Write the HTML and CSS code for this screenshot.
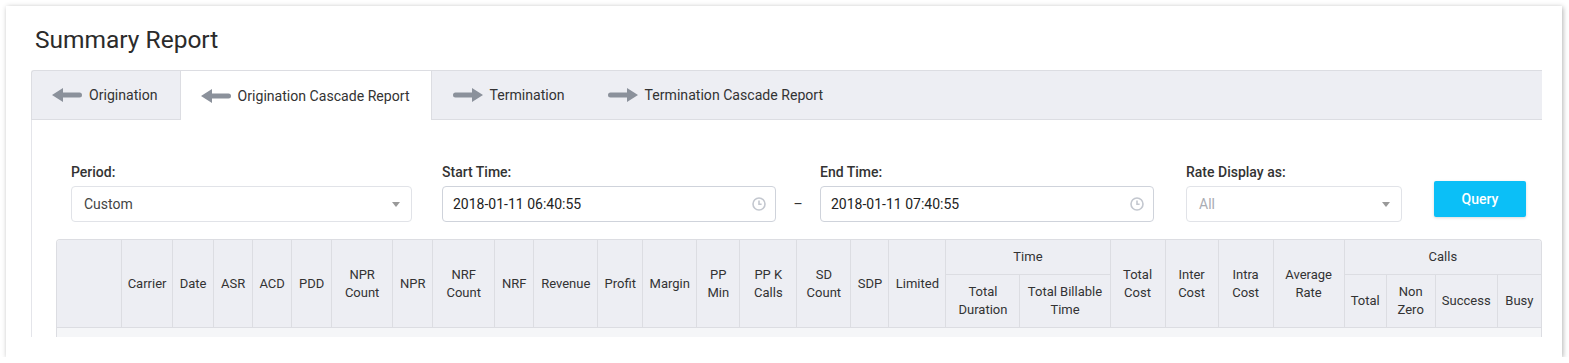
FILE: index.html
```html
<!DOCTYPE html>
<html lang="en">
<head>
  <meta charset="UTF-8">
  <title>Summary Report</title>
  <link rel="stylesheet" href="styles.css">
</head>
<body>

  <div class="card">
    <h1 class="page-title">Summary Report</h1>

    <div class="tabs">
      <div class="tab">
        <svg class="arrow" width="30" height="14" viewBox="0 0 30 14"><path d="M0 7 L11 0 L11 4.5 L27.5 4.5 Q30 4.5 30 7 Q30 9.5 27.5 9.5 L11 9.5 L11 14 Z"/></svg>
        <span>Origination</span>
      </div>
      <div class="tab active">
        <svg class="arrow" width="30" height="14" viewBox="0 0 30 14"><path d="M0 7 L11 0 L11 4.5 L27.5 4.5 Q30 4.5 30 7 Q30 9.5 27.5 9.5 L11 9.5 L11 14 Z"/></svg>
        <span>Origination Cascade Report</span>
      </div>
      <div class="tab">
        <svg class="arrow" width="30" height="14" viewBox="0 0 30 14"><path d="M30 7 L19 0 L19 4.5 L2.5 4.5 Q0 4.5 0 7 Q0 9.5 2.5 9.5 L19 9.5 L19 14 Z"/></svg>
        <span>Termination</span>
      </div>
      <div class="tab">
        <svg class="arrow" width="30" height="14" viewBox="0 0 30 14"><path d="M30 7 L19 0 L19 4.5 L2.5 4.5 Q0 4.5 0 7 Q0 9.5 2.5 9.5 L19 9.5 L19 14 Z"/></svg>
        <span>Termination Cascade Report</span>
      </div>
    </div>

    <div class="tab-panel">
      <div class="filters">
        <div class="field field-period">
          <label>Period:</label>
          <div class="control">
            <span class="value">Custom</span>
            <span class="caret"></span>
          </div>
        </div>

        <div class="field field-time">
          <label>Start Time:</label>
          <div class="control input">
            <span class="value dark">2018-01-11 06:40:55</span>
            <svg class="clock" width="14" height="14" viewBox="0 0 14 14"><circle cx="7" cy="7" r="6" /><path d="M7 3.6 V7.3 H9.6" /></svg>
          </div>
        </div>

        <div class="dash">–</div>

        <div class="field field-time">
          <label>End Time:</label>
          <div class="control input">
            <span class="value dark">2018-01-11 07:40:55</span>
            <svg class="clock" width="14" height="14" viewBox="0 0 14 14"><circle cx="7" cy="7" r="6" /><path d="M7 3.6 V7.3 H9.6" /></svg>
          </div>
        </div>

        <div class="field field-rate">
          <label>Rate Display as:</label>
          <div class="control">
            <span class="value placeholder">All</span>
            <span class="caret"></span>
          </div>
        </div>

        <button class="btn-query">Query</button>
      </div>

      <div class="table-wrap">
        <table class="report">
          <colgroup>
            <col style="width:65px"><col style="width:51px"><col style="width:41px"><col style="width:39px">
            <col style="width:39px"><col style="width:40px"><col style="width:61px"><col style="width:40px">
            <col style="width:62px"><col style="width:39px"><col style="width:64px"><col style="width:45px">
            <col style="width:54px"><col style="width:43px"><col style="width:57px"><col style="width:54px">
            <col style="width:38px"><col style="width:57px"><col style="width:74px"><col style="width:90px">
            <col style="width:55px"><col style="width:53px"><col style="width:55px"><col style="width:71px">
            <col style="width:42px"><col style="width:49px"><col style="width:62px"><col style="width:43px">
          </colgroup>
          <thead>
            <tr class="row-group">
              <th rowspan="2"></th>
              <th rowspan="2">Carrier</th>
              <th rowspan="2">Date</th>
              <th rowspan="2">ASR</th>
              <th rowspan="2">ACD</th>
              <th rowspan="2">PDD</th>
              <th rowspan="2">NPR<br>Count</th>
              <th rowspan="2">NPR</th>
              <th rowspan="2">NRF<br>Count</th>
              <th rowspan="2">NRF</th>
              <th rowspan="2">Revenue</th>
              <th rowspan="2">Profit</th>
              <th rowspan="2">Margin</th>
              <th rowspan="2">PP<br>Min</th>
              <th rowspan="2">PP K<br>Calls</th>
              <th rowspan="2">SD<br>Count</th>
              <th rowspan="2">SDP</th>
              <th rowspan="2">Limited</th>
              <th colspan="2">Time</th>
              <th rowspan="2">Total<br>Cost</th>
              <th rowspan="2">Inter<br>Cost</th>
              <th rowspan="2">Intra<br>Cost</th>
              <th rowspan="2">Average<br>Rate</th>
              <th colspan="4" class="last">Calls</th>
            </tr>
            <tr class="row-sub">
              <th>Total<br>Duration</th>
              <th>Total Billable<br>Time</th>
              <th>Total</th>
              <th>Non<br>Zero</th>
              <th>Success</th>
              <th class="last">Busy</th>
            </tr>
          </thead>
          <tbody>
            <tr>
              <td colspan="28"></td>
            </tr>
          </tbody>
        </table>
      </div>
    </div>
  </div>

</body>
</html>
```

FILE: styles.css
```css
* {
  margin: 0;
  padding: 0;
  box-sizing: border-box;
}

body {
  background-color: #fff;
  color: #333;
  font-family: Roboto, 'Liberation Sans', sans-serif;
  font-size: 14px;
}

.card {
  margin: 6px 7px 0 6px;
  padding: 20px 20px 20px 25px;
  background: #fff;
  box-shadow: 1px 1px 5px rgba(0, 0, 0, 0.3);
}

.page-title {
  font-size: 24.5px;
  font-weight: 400;
  line-height: 28px;
  color: #2b2b2b;
  padding-left: 4px;
  margin-bottom: 16px;
}

/* Tabs */
.tabs {
  display: flex;
  height: 50px;
  background: #edeef3;
  border: 1px solid #dcdde2;
  border-right: none;
  border-radius: 3px 0 0 0;
}

.tab {
  display: flex;
  align-items: center;
  gap: 7px;
  padding: 0 21px 0 20px;
  border-left: 1px solid transparent;
  border-right: 1px solid transparent;
  color: #333;
  font-size: 14.1px;
  cursor: pointer;
}

.tab:first-child {
  border-left: none;
}

.tab.active {
  background: #fff;
  border-color: #dcdde2;
  margin-bottom: -1px;
}

.arrow {
  fill: #8b919b;
  flex-shrink: 0;
}

.tab-panel {
  border-left: 1px solid #e4e5ea;
  padding: 42px 0 0 24px;
}

/* Filters */
.filters {
  display: flex;
  align-items: flex-end;
  padding: 0 16px 0 15px;
  margin-bottom: 17px;
}

.field label {
  display: block;
  font-size: 14px;
  font-weight: 500;
  line-height: 20px;
  color: #333;
  margin-bottom: 4px;
}

.field-period {
  width: 341px;
  margin-right: 30px;
}

.field-time {
  width: 334px;
}

.field-rate {
  width: 216px;
  margin-left: 32px;
  margin-right: 32px;
}

.dash {
  width: 44px;
  height: 36px;
  line-height: 36px;
  text-align: center;
  color: #333;
}

.control {
  display: flex;
  align-items: center;
  justify-content: space-between;
  height: 36px;
  padding: 0 11px 0 12px;
  border: 1px solid #e1e3e8;
  border-radius: 4px;
  background: #fff;
}

.control.input {
  border-color: #cfd3db;
  padding: 0 9px 0 10px;
}

.value {
  color: #444;
}

.value.dark {
  color: #222;
}

.value.placeholder {
  color: #a9acb3;
}

.caret {
  width: 0;
  height: 0;
  border-left: 4px solid transparent;
  border-right: 4px solid transparent;
  border-top: 5px solid #999;
}

.clock {
  fill: none;
  stroke: #c3c7cf;
  stroke-width: 1.6;
}

.btn-query {
  width: 92px;
  height: 36px;
  margin-bottom: 5px;
  border: none;
  border-radius: 2px;
  background-color: #0bbff7;
  color: #fff;
  font-family: inherit;
  font-size: 14px;
  font-weight: 500;
  box-shadow: 0 1px 3px rgba(0, 0, 0, 0.15);
  cursor: pointer;
}

/* Table */
.table-wrap {
  height: 98px;
  overflow: hidden;
  border: 1px solid #dcdde2;
  border-bottom: none;
  border-radius: 4px 4px 0 0;
}

.report {
  width: 100%;
  table-layout: fixed;
  border-collapse: separate;
  border-spacing: 0;
}

.report th {
  background: #edeef3;
  font-size: 13px;
  font-weight: 400;
  line-height: 18px;
  color: #333;
  text-align: center;
  vertical-align: middle;
  padding: 0 4px;
  border-right: 1px solid #dcdde2;
  border-bottom: 1px solid #dcdde2;
  white-space: nowrap;
}

.report th.last {
  border-right: none;
}

.row-group {
  height: 35px;
}

.row-sub {
  height: 53px;
}

.report td {
  height: 40px;
  background: #f5f6f8;
}
```
